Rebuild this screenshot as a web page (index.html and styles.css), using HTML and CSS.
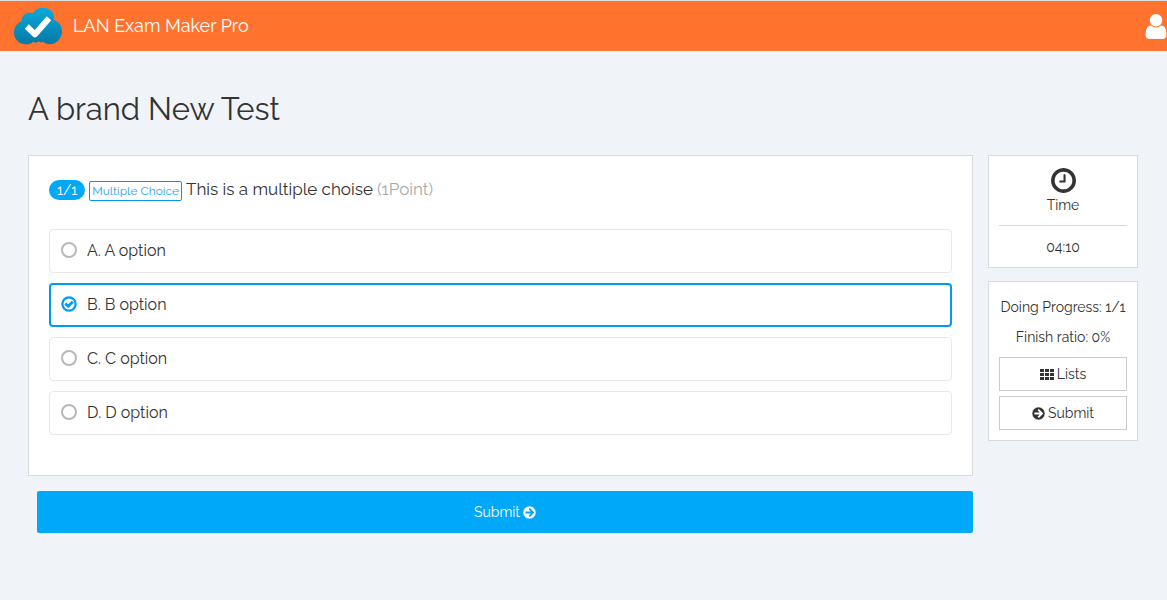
FILE: index.html
```
<!DOCTYPE html>
<html lang="en">
<head>
  <meta charset="UTF-8">
  <meta name="viewport" content="width=device-width, initial-scale=1.0">
  <title>LAN Exam Maker Pro</title>
  <link rel="stylesheet" href="styles.css">
</head>
<body>
  <!-- Shared icons -->
  <svg class="sprite" aria-hidden="true">
    <symbol id="icon-arrow" viewBox="0 0 24 24">
      <circle cx="12" cy="12" r="12" fill="currentColor"/>
      <path class="arrow-line" d="M4.500 12H18M11.500 5l7 7-7 7" fill="none" stroke-width="3.400"/>
    </symbol>
  </svg>

  <header class="navbar">
    <a href="#" class="brand">
      <svg class="logo" viewBox="0 0 49 38" aria-hidden="true">
        <defs>
          <linearGradient id="cloud" x1="0" y1="0" x2="0" y2="1">
            <stop offset="0" stop-color="#08a9dc"/>
            <stop offset="1" stop-color="#0778a6"/>
          </linearGradient>
        </defs>
        <path fill="url(#cloud)" d="M8.200 14.200C7.500 8.500 14 3.700 19.500 6.300C23-1 37-1.500 40 7.500C40.800 9.800 40.500 11.500 40.300 12.800C45.500 14.500 48.800 19.500 48.500 25C48 32.500 42 37.500 36 37.300C33.500 37.200 31.300 36.300 29.500 34.800C28.200 35.600 26.500 35.600 25.300 34.600C23.800 36 21.500 36 19.800 34.800C17.500 36.800 14.500 37.600 11.500 37.300C4.800 37 .2 31.500 .5 25C.7 19.800 3.500 16 8.200 14.200Z"/>
        <path fill="none" stroke="#fff" stroke-width="6" stroke-linejoin="round" d="M13.300 19.500L21.500 27.300L35.500 11.300"/>
      </svg>
      <span>LAN Exam Maker Pro</span>
    </a>
    <a href="#" class="user-link" aria-label="Account">
      <svg viewBox="256 128 1280 1536" aria-hidden="true"><path fill="currentColor" d="M1536 1399q0 109-62.500 187t-150.500 78h-854q-88 0-150.500-78t-62.500-187q0-85 8.500-160.500t31.500-152 58.500-131 94-89 134.500-34.500q131 128 313 128t313-128q76 0 134.500 34.500t94 89 58.500 131 31.500 152 8.500 160.500zm-256-887q0 159-112.500 271.500t-271.500 112.500-271.500-112.500-112.500-271.500 112.500-271.500 271.500-112.500 271.500 112.500 112.500 271.500z"/></svg>
    </a>
  </header>

  <main class="container">
    <h1>A brand New Test</h1>

    <div class="exam">
      <form class="exam-main" id="exam-form">
        <fieldset class="card question">
          <legend class="question-title">
            <span class="badge">1/1</span>
            <span class="type">Multiple Choice</span>
            <span>This is a multiple choise</span>
            <span class="points">(1Point)</span>
          </legend>
          <label class="option">
            <input type="radio" name="answer" value="A">
            <span>A. A option</span>
          </label>
          <label class="option">
            <input type="radio" name="answer" value="B" checked>
            <svg class="check" viewBox="0 0 16 16" aria-hidden="true">
              <circle cx="8" cy="8" r="6.600" fill="none" stroke="currentColor" stroke-width="2.200"/>
              <path d="M4.300 7.500L7.300 10.300L11.800 5.600" fill="none" stroke="currentColor" stroke-width="2.800"/>
            </svg>
            <span>B. B option</span>
          </label>
          <label class="option">
            <input type="radio" name="answer" value="C">
            <span>C. C option</span>
          </label>
          <label class="option">
            <input type="radio" name="answer" value="D">
            <span>D. D option</span>
          </label>
        </fieldset>
        <button type="submit" class="submit-btn">Submit <svg class="icon" aria-hidden="true"><use href="#icon-arrow"/></svg></button>
      </form>

      <aside class="sidebar">
        <div class="card timer">
          <svg class="clock" viewBox="128 128 1536 1536" aria-hidden="true"><path fill="currentColor" d="M1024 544v448q0 14-9 23t-23 9h-320q-14 0-23-9t-9-23v-64q0-14 9-23t23-9h224v-352q0-14 9-23t23-9h64q14 0 23 9t9 23zm416 352q0-148-73-273t-198-198-273-73-273 73-198 198-73 273 73 273 198 198 273 73 273-73 198-198 73-273zm224 0q0 209-103 385.500t-279.500 279.500-385.500 103-385.500-103-279.500-279.500-103-385.500 103-385.500 279.500-279.500 385.500-103 385.500 103 279.500 279.500 103 385.500z"/></svg>
          <div class="timer-label">Time</div>
          <div class="timer-value">04:10</div>
        </div>
        <div class="card progress">
          <p>Doing Progress: 1/1</p>
          <p>Finish ratio: 0%</p>
          <button type="button" class="side-btn">
            <svg class="icon-grid" viewBox="0 0 14 11" aria-hidden="true"><path fill="currentColor" d="M0 0h4v3H0zM5 0h4v3H5zM10 0h4v3h-4zM0 4h4v3H0zM5 4h4v3H5zM10 4h4v3h-4zM0 8h4v3H0zM5 8h4v3H5zM10 8h4v3h-4z"/></svg>
            <span>Lists</span>
          </button>
          <button type="submit" form="exam-form" class="side-btn">
            <svg class="icon" aria-hidden="true"><use href="#icon-arrow"/></svg>
            <span>Submit</span>
          </button>
        </div>
      </aside>
    </div>
  </main>
</body>
</html>
```

FILE: styles.css
```
* {
  box-sizing: border-box;
}
body {
  margin: 0;
  background-color: #f0f4f9;
  color: #333;
  font-family: Raleway, Lato, sans-serif;
  font-size: 14px;
  line-height: 20px;
}
.sprite {
  display: none;
}
.navbar {
  display: flex;
  justify-content: space-between;
  align-items: center;
  height: 51px;
  padding-left: 13px;
  border-top: 1px solid #e0e0e0;
  background-color: #ff732e;
}
.brand {
  display: flex;
  align-items: center;
  gap: 10px;
  color: #fff;
  font-size: 18px;
  text-decoration: none;
}
.logo {
  width: 50px;
  height: 38px;
}
.user-link {
  color: #fff;
}
.user-link svg {
  display: block;
  width: 22px;
  height: 25px;
}
.container {
  padding: 38px 29px 40px 28px;
}
h1 {
  margin: 0 0 26px;
  font-size: 31px;
  font-weight: 400;
  line-height: 40px;
}
.exam {
  display: flex;
  align-items: flex-start;
  gap: 15px;
}
.exam-main {
  flex: 1;
  min-width: 0;
}
.card {
  border: 1px solid #d9dadc;
  background-color: #fff;
}
.question {
  display: flex;
  flex-direction: column;
  gap: 10px;
  margin: 0;
  padding: 20px 20px 40px;
}
.question-title {
  display: flex;
  flex-wrap: wrap;
  align-items: baseline;
  gap: 4px;
  float: left;
  width: 100%;
  margin-bottom: 17px;
  padding: 0;
  font-size: 17px;
  line-height: 26px;
}
.badge {
  padding: 0 8px;
  border-radius: 10px;
  background-color: #00a8fa;
  color: #fff;
  font-size: 14px;
  line-height: 20px;
}
.type {
  padding: 0 2px;
  border: 1px solid #0295ec;
  border-radius: 2px;
  color: #27a4f2;
  font-size: 12px;
  line-height: 18px;
}
.points {
  color: #aaa;
}
.option {
  display: flex;
  align-items: center;
  gap: 10px;
  height: 44px;
  padding: 0 11px;
  border: 1px solid #e8e8e8;
  border-radius: 4px;
  font-size: 16px;
  cursor: pointer;
}
.option:has(input:checked) {
  padding: 0 10px;
  border: 2px solid #0099f5;
}
.option input {
  appearance: none;
  width: 16px;
  height: 16px;
  margin: 0 0 2px;
  border: 2px solid #b8b8b8;
  border-radius: 50%;
}
.check {
  display: none;
  width: 16px;
  height: 16px;
  margin-bottom: 2px;
  color: #0099fa;
}
/* the drawn tick stands in for the radio's own circle */
.option input:checked {
  width: 0;
  margin-right: -10px;
  border: 0;
}
.option input:checked + .check {
  display: block;
}
button {
  font-family: inherit;
  font-size: 14px;
  line-height: 20px;
  cursor: pointer;
}
.icon {
  width: 13px;
  height: 13px;
  stroke: #fff;
}
.icon-grid {
  width: 14px;
  height: 11px;
}
.submit-btn {
  display: flex;
  justify-content: center;
  align-items: center;
  gap: 3px;
  width: calc(100% - 9px);
  height: 42px;
  margin: 15px 0 0 9px;
  border: 0;
  border-radius: 2px;
  background-color: #00a8fa;
  color: #fff;
}
.submit-btn .icon {
  stroke: #00a8fa;
}
.sidebar {
  display: flex;
  flex-direction: column;
  gap: 13px;
  width: 150px;
  text-align: center;
}
.timer {
  padding: 12px 10px 10px;
}
.clock {
  display: block;
  width: 25px;
  height: 25px;
  margin: 0 auto 2px;
}
.timer-label {
  padding-bottom: 10px;
  border-bottom: 1px solid #d9dadc;
}
.timer-value {
  padding-top: 11px;
}
.progress {
  padding: 10px;
}
.progress p {
  margin: 0;
  line-height: 30px;
}
.side-btn {
  display: flex;
  justify-content: center;
  align-items: center;
  gap: 3px;
  width: 100%;
  height: 34px;
  margin-top: 5px;
  border: 1px solid #ccc;
  background-color: #fff;
  color: #333;
}
```
